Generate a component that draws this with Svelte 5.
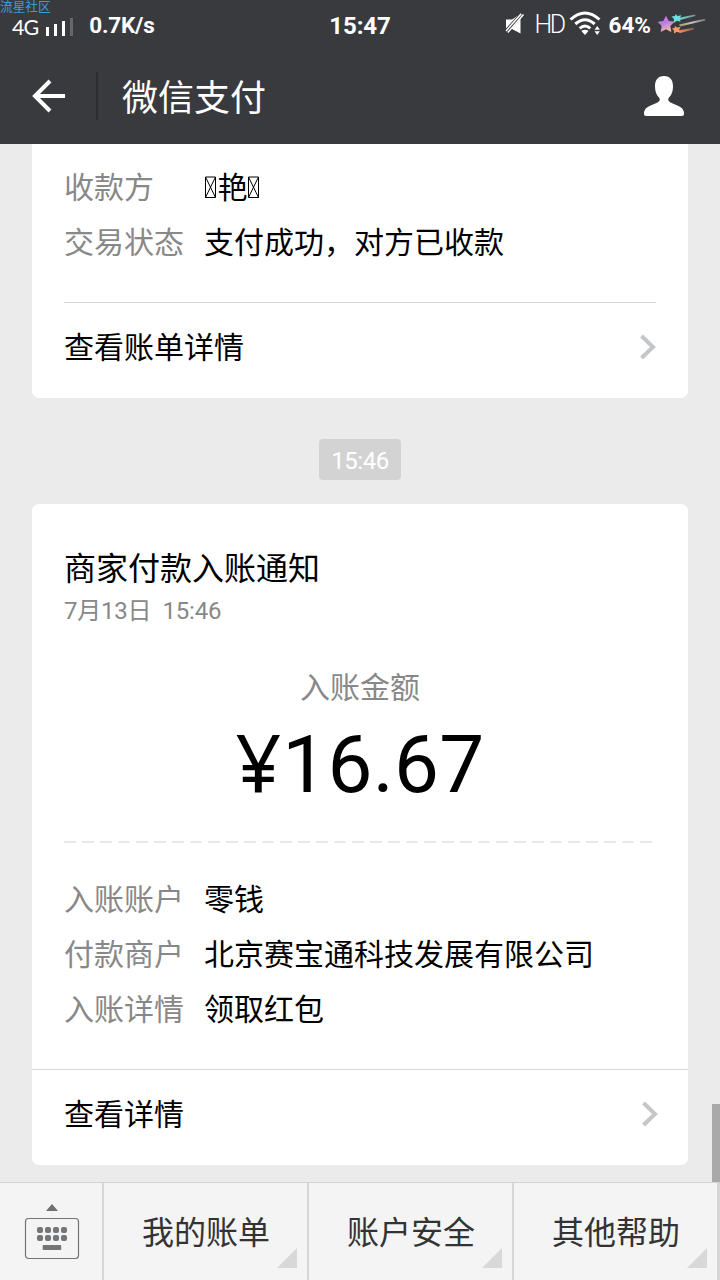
<script lang="ts">
  interface Row { label: string; value: string }

  const signal = [9, 12, 15, 18]

  const incomeRows: Row[] = [
    { label: '入账账户', value: '零钱' },
    { label: '付款商户', value: '北京赛宝通科技发展有限公司' },
    { label: '入账详情', value: '领取红包' },
  ]

  const menus = ['我的账单', '账户安全', '其他帮助']
</script>

{#snippet missing()}
  <svg class="missing" width="14" height="23" viewBox="0 0 14 23">
    <path d="M1.500 1h10v20.500h-10zM1.500 1l10 20.500M11.500 1l-10 20.500" fill="none" stroke="#000" stroke-width="1" />
  </svg>
{/snippet}

{#snippet chevron()}
  <svg class="chevron" width="18" height="26" viewBox="0 0 18 26">
    <path d="M2.500 2 L14 13 L2.500 24" fill="none" stroke="#c5c6c8" stroke-width="4" />
  </svg>
{/snippet}

<div class="phone">
  <span class="watermark">流星社区</span>

  <header>
    <div class="status">
      <div class="status-left">
        <span class="thin">4G</span>
        <div class="signal">
          {#each signal as h, i}
            <i class:off={i === 3} style="height:{h}px"></i>
          {/each}
        </div>
        <b class="speed">0.7K/s</b>
      </div>
      <b class="clock">15:47</b>
      <div class="status-right">
        <svg class="mute" width="20" height="22" viewBox="0 0 20 22">
          <path d="M1 6.500h6L15.500 1v19.500L7 16H1z" fill="#fff" />
          <path d="M0 19.800L17.500 .500" stroke="#393a3e" stroke-width="4.500" />
          <path d="M1 18L16.200 .800M2.800 19.500L18.500 1.500" stroke="#fff" stroke-width="1.500" />
        </svg>
        <span class="thin hd">HD</span>
        <svg class="wifi" width="33" height="26" viewBox="0 0 33 26">
          <g fill="none" stroke="#fff" stroke-width="3">
            <path d="M1.500 8.500Q16 -4.500 30.500 8.500" />
            <path d="M6.300 13Q16 4.500 25.700 13" />
            <path d="M10.700 17.300Q16 12.800 21.300 17.300" />
          </g>
          <path d="M12.300 20Q16 17.500 19.500 20L16 24z" fill="#fff" />
          <path d="M25.500 18.800L28.200 15l2.700 3.800zM25.500 20.300L28.200 24l2.700-3.700z" fill="#fff" />
        </svg>
        <b class="battery">64%</b>
        <svg class="meteor" width="50" height="24" viewBox="0 0 50 24">
          <defs>
            <linearGradient id="star" x1="0" y1="0" x2=".4" y2="1">
              <stop offset="0" stop-color="#ee73c9" />
              <stop offset=".5" stop-color="#b57bf0" />
              <stop offset="1" stop-color="#f4b8a0" />
            </linearGradient>
            <linearGradient id="teal"><stop offset="0" stop-color="#62e0d8" /><stop offset="1" stop-color="#858a8b" /></linearGradient>
            <linearGradient id="sand"><stop offset="0" stop-color="#a89a76" /><stop offset=".5" stop-color="#c9c4bb" /><stop offset="1" stop-color="#77777a" /></linearGradient>
            <linearGradient id="orange"><stop offset="0" stop-color="#ff925f" /><stop offset="1" stop-color="#80604f" /></linearGradient>
          </defs>
          <path d="M20 5L37 1.500l.500 1.500L22 7z" fill="url(#teal)" />
          <path d="M21 11.500L47 5.800l.500 1.800L22 13.500z" fill="url(#sand)" />
          <path d="M20 17.500L35.500 14.700l.500 1.700L22 20z" fill="url(#orange)" />
          <path d="M17.500 1l2 2 4-.700-2 3 1 3.500-3.500-1L15.500 10l.5-4-2.500-2.500 3.500-.500z" fill="#67e3df" />
          <path d="M17 13l2 1.500 3.500-.500-1.500 3 1 2.500-3.500-.5L16 20.500v-3L14 15.500l2.500-.500z" fill="#ff9966" />
          <path d="M8 2.800l2.700 5.200 5.800.800-4.200 4.200 1 6-5.300-2.800-5.300 2.800 1-6-4.200-4.200 5.800-.800z" fill="url(#star)" />
        </svg>
      </div>
    </div>

    <div class="nav">
      <svg class="back" width="34" height="34" viewBox="0 0 34 34">
        <path d="M18 2L3 17L18 32M3 17H33" fill="none" stroke="#fff" stroke-width="4" />
      </svg>
      <h1>微信支付</h1>
      <svg class="person" width="42" height="42" viewBox="0 0 42 42">
        <path d="M21 1C14.500 1 12 5.500 12 11.500C12 16.500 13.500 20 16 22.500C17.500 24.500 17 26 14.500 27.500L5.500 31.500C2 33.500 1 35.500 1 38.500C1 40.300 1.700 41 3.500 41H38.500C40.300 41 41 40.300 41 38.500C41 35.500 40 33.500 36.500 31.500L27.500 27.500C25 26 24.500 24.500 26 22.500C28.500 20 30 16.500 30 11.500C30 5.500 27.500 1 21 1Z" fill="#fff" />
      </svg>
    </div>
  </header>

  <main>
    <section class="card first">
      <div class="rows">
        <div class="row">
          <span class="label">收款方</span>
          <span class="value">{@render missing()}艳{@render missing()}</span>
        </div>
        <div class="row">
          <span class="label">交易状态</span>
          <span class="value">支付成功，对方已收款</span>
        </div>
      </div>
      <div class="more inset">
        <span>查看账单详情</span>
        {@render chevron()}
      </div>
    </section>

    <time class="stamp">15:46</time>

    <section class="card second">
      <h2>商家付款入账通知</h2>
      <div class="date">7月13日&nbsp; 15:46</div>
      <div class="caption">入账金额</div>
      <div class="amount"><span>¥</span>16.67</div>
      <div class="dashes"></div>
      <div class="rows">
        {#each incomeRows as row}
          <div class="row">
            <span class="label">{row.label}</span>
            <span class="value">{row.value}</span>
          </div>
        {/each}
      </div>
      <div class="more">
        <span>查看详情</span>
        {@render chevron()}
      </div>
    </section>

    <div class="scrollbar"></div>
  </main>

  <footer>
    <div class="keyboard">
      <svg width="56" height="58" viewBox="0 0 56 58">
        <path d="M22 8L28 1L34 8z" fill="#6e7072" />
        <rect x="1.500" y="15.500" width="53" height="40" rx="3" fill="none" stroke="#737577" stroke-width="1.200" />
        {#each [0, 1] as y}
          {#each [0, 1, 2, 3] as x}
            <rect x={13 + x * 8} y={24 + y * 8} width="6" height="6" rx="2" fill="#737577" />
          {/each}
        {/each}
        <rect x="18.700" y="42" width="18.500" height="5" rx=".8" fill="#737577" />
      </svg>
    </div>
    {#each menus as menu}
      <div class="menu">{menu}</div>
    {/each}
    <div class="edge"></div>
  </footer>
</div>

<style>
  :global(body) { margin: 0; }
  .phone {
    position: relative;
    width: 720px; height: 1280px;
    display: flex; flex-direction: column;
    overflow: hidden;
    background: #ebebeb; color: #000;
    font-family: Roboto, "Noto Sans CJK SC", sans-serif;
  }
  svg { display: block; flex-shrink: 0; }
  .watermark {
    position: absolute; left: 0; top: -1px;
    font-size: 12.700px; line-height: 15px; color: #3d9be0;
  }

  header { height: 144px; flex-shrink: 0; background: #393a3e; color: #fff; }
  .status {
    height: 50px;
    display: grid; grid-template-columns: 1fr auto 1fr;
    font-size: 22.500px; line-height: 50px;
  }
  .status-left, .status-right { display: flex; align-items: center; height: 50px; }
  .status-left { padding-left: 12px; }
  .thin { margin-top: 3px; font-family: Lato, sans-serif; font-size: 21.500px; line-height: 20px; letter-spacing: -1px; }
  .signal { display: flex; align-items: flex-end; gap: 5px; margin: 3px 0 0 8px; height: 18px; }
  .signal i { width: 3px; background: #fff; }
  .signal i.off { background: #66676a; }
  .speed { margin: 0 0 1px 16px; line-height: 30px; letter-spacing: -0.2px; }
  .clock { font-size: 24px; line-height: 52px; letter-spacing: -0.1px; }
  .status-right { justify-content: flex-end; padding-right: 12px; }
  .mute { margin-bottom: 2px; }
  .hd { margin: 0 0 0 9px; font-family: Roboto, sans-serif; font-size: 25px; line-height: 30px; font-weight: 300; letter-spacing: -2.500px; }
  .wifi { margin: 0 0 3px 5px; }
  .battery { margin: 0 0 1px 7px; line-height: 30px; }
  .meteor { margin-left: 7px; }

  .nav { height: 94px; display: flex; align-items: center; }
  .back { margin: 0 30px 2px 32px; }
  h1 {
    flex: 1; height: 48px; margin: 0 0 2px;
    padding-left: 24px; border-left: 2px solid #2c2d30;
    font-size: 36px; font-weight: 400; line-height: 54px;
  }
  .person { margin: 0 35px 2px 0; }

  main {
    position: relative; flex: 1; min-height: 0;
    display: flex; flex-direction: column; align-items: center;
  }
  .card { width: 656px; background: #fff; border-radius: 7px; flex-shrink: 0; }
  .first { height: 254px; border-radius: 0 0 7px 7px; }
  .first .rows { padding: 16px 32px 32px; }
  .row { display: flex; height: 55px; font-size: 30px; line-height: 55px; }
  .label { width: 140px; color: #888; }
  .value { display: flex; align-items: center; }
  .missing { margin: 0 0 1px -.5px; }
  .more {
    height: 95px; padding: 0 29px 0 32px;
    display: flex; justify-content: space-between;
    border-top: 1px solid #d8d8d8;
    font-size: 30px; line-height: 89px;
  }
  .more.inset { margin: 0 32px; padding: 0; }
  .inset .chevron { margin-right: -1px; }
  .chevron { margin-top: 31px; }

  .stamp {
    margin: 41px 0 24px; width: 82px; height: 41px;
    border-radius: 4px; background: #d3d3d3; color: #fff;
    font-size: 24px; line-height: 44px; text-align: center; letter-spacing: -0.5px;
  }

  .second { height: 661px; }
  h2 { margin: 0; padding: 41px 32px 0; font-size: 32px; font-weight: 400; line-height: 48px; }
  .date { padding: 0 32px; font-size: 24px; line-height: 36px; color: #888; letter-spacing: -0.25px; }
  .caption { margin-top: 36px; text-align: center; font-size: 30px; line-height: 46px; color: #888; }
  .amount { height: 100px; text-align: center; font-size: 80px; line-height: 108px; letter-spacing: 0.3px; }
  .amount span { font-family: "Noto Sans", sans-serif; line-height: 1; letter-spacing: 1px; }
  .dashes {
    height: 2px; margin: 30px 36px 0 32px;
    background: repeating-linear-gradient(90deg, #e8e8e8 0 12px, transparent 12px 18px);
  }
  .second .rows { padding: 29px 32px 32px; }

  .scrollbar { position: absolute; right: 0; bottom: 0; width: 8px; height: 78px; background: #a9a9a9; }

  footer {
    height: 98px; box-sizing: border-box; flex-shrink: 0;
    display: flex; background: #f4f4f4; border-top: 1px solid #d3d3d3;
  }
  .keyboard { width: 102px; padding-left: 1px; box-sizing: border-box; display: flex; align-items: center; justify-content: center; }
  .keyboard svg { margin-left: 1px; }
  .menu {
    position: relative; box-sizing: border-box;
    width: 205px; padding-left: 1px; border-left: 2px solid #d6d6d6;
    color: #333; font-size: 32px; line-height: 101px; text-align: center;
  }
  .menu::after {
    content: ''; position: absolute; right: 10px; bottom: 12px;
    border-bottom: 20px solid #d8d8d8; border-left: 20px solid transparent;
  }
  .edge { width: 3px; background: #d6d6d6; }
</style>
